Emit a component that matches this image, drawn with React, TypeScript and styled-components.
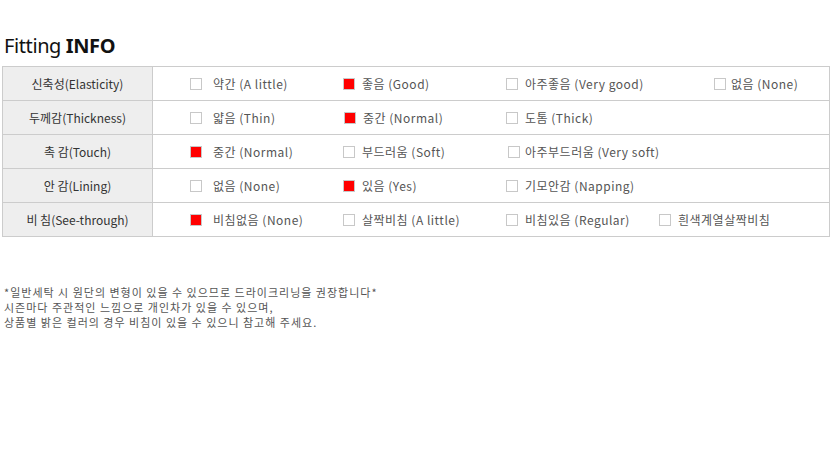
import React from "react";
import styled, { createGlobalStyle } from "styled-components";

const GlobalStyle = createGlobalStyle`
  body {
    margin: 0;
    background: #fff;
    font-family: "Noto Sans CJK KR", "Noto Sans", sans-serif;
  }
`;

const Page = styled.div`
  width: 832px;
  padding: 34px 2px 0 2px;
  box-sizing: border-box;
`;

const Title = styled.h2`
  margin: 0 0 8px 2px;
  font-family: "Noto Sans", "Noto Sans CJK KR", sans-serif;
  font-size: 20px;
  font-weight: 400;
  line-height: 24px;
  color: #111;
  letter-spacing: -0.4px;

  strong {
    font-weight: 700;
  }
`;

const Table = styled.div`
  width: 828px;
  border-top: 1px solid #ccc;
  border-left: 1px solid #ccc;
  box-sizing: border-box;
`;

const Row = styled.div`
  display: grid;
  grid-template-columns: 150px 1fr;
  height: 34px;
  border-bottom: 1px solid #ccc;
  box-sizing: border-box;
`;

const Label = styled.div`
  display: flex;
  align-items: center;
  justify-content: center;
  background: #eee;
  border-right: 1px solid #ccc;
  font-size: 12px;
  color: #333;
`;

const Options = styled.div<{ $cols: string }>`
  display: grid;
  grid-template-columns: ${(p) => p.$cols};
  align-items: center;
  padding-left: 37px;
  border-right: 1px solid #ccc;
`;

const Option = styled.div<{ $gap?: number }>`
  display: flex;
  align-items: center;
  gap: ${(p) => p.$gap ?? 7}px;
  font-size: 12px;
  letter-spacing: 0.5px;
  color: #555;
  white-space: nowrap;

  &:first-child {
    gap: 11px;
  }
`;

const Box = styled.span<{ $on?: boolean }>`
  display: inline-block;
  flex: none;
  width: 12px;
  height: 12px;
  box-sizing: border-box;
  border: 1px solid #c8c8c8;
  background: ${(p) => (p.$on ? "#f00" : "#fff")};
  margin-top: 1px;
`;

const Notes = styled.div`
  margin: 48px 0 0 2px;
`;

const NoteLine = styled.p`
  margin: 0;
  height: 15px;
  font-size: 11px;
  line-height: 15px;
  letter-spacing: 1px;
  color: #555;
  white-space: nowrap;
`;

type Item = [string, boolean, number?];
type FitRow = { label: string; cols: string; items: Item[] };

const rows: FitRow[] = [
  {
    label: "신축성(Elasticity)",
    cols: "153px 163px 208px auto",
    items: [
      ["약간 (A little)", false],
      ["좋음 (Good)", true],
      ["아주좋음 (Very good)", false],
      ["없음 (None)", false, 5],
    ],
  },
  {
    label: "두께감(Thickness)",
    cols: "154px 162px auto",
    items: [
      ["얇음 (Thin)", false],
      ["중간 (Normal)", true],
      ["도톰 (Thick)", false],
    ],
  },
  {
    label: "촉 감(Touch)",
    cols: "153px 165px auto",
    items: [
      ["중간 (Normal)", true],
      ["부드러움 (Soft)", false],
      ["아주부드러움 (Very soft)", false, 5],
    ],
  },
  {
    label: "안 감(Lining)",
    cols: "153px 163px auto",
    items: [
      ["없음 (None)", false],
      ["있음 (Yes)", true],
      ["기모안감 (Napping)", false],
    ],
  },
  {
    label: "비 침(See-through)",
    cols: "153px 163px 153px auto",
    items: [
      ["비침없음 (None)", true],
      ["살짝비침 (A little)", false],
      ["비침있음 (Regular)", false],
      ["흰색계열살짝비침", false],
    ],
  },
];

const notes = [
  "*일반세탁 시 원단의 변형이 있을 수 있으므로 드라이크리닝을 권장합니다*",
  "시즌마다 주관적인 느낌으로 개인차가 있을 수 있으며,",
  "상품별 밝은 컬러의 경우 비침이 있을 수 있으니 참고해 주세요.",
];

export default function App() {
  return (
    <Page>
      <GlobalStyle />
      <Title>
        Fitting <strong>INFO</strong>
      </Title>
      <Table>
        {rows.map((r) => (
          <Row key={r.label}>
            <Label>{r.label}</Label>
            <Options $cols={r.cols}>
              {r.items.map(([text, on, gap]) => (
                <Option key={text} $gap={gap}>
                  <Box $on={on} />
                  {text}
                </Option>
              ))}
            </Options>
          </Row>
        ))}
      </Table>
      <Notes>
        {notes.map((n) => (
          <NoteLine key={n}>{n}</NoteLine>
        ))}
      </Notes>
    </Page>
  );
}
